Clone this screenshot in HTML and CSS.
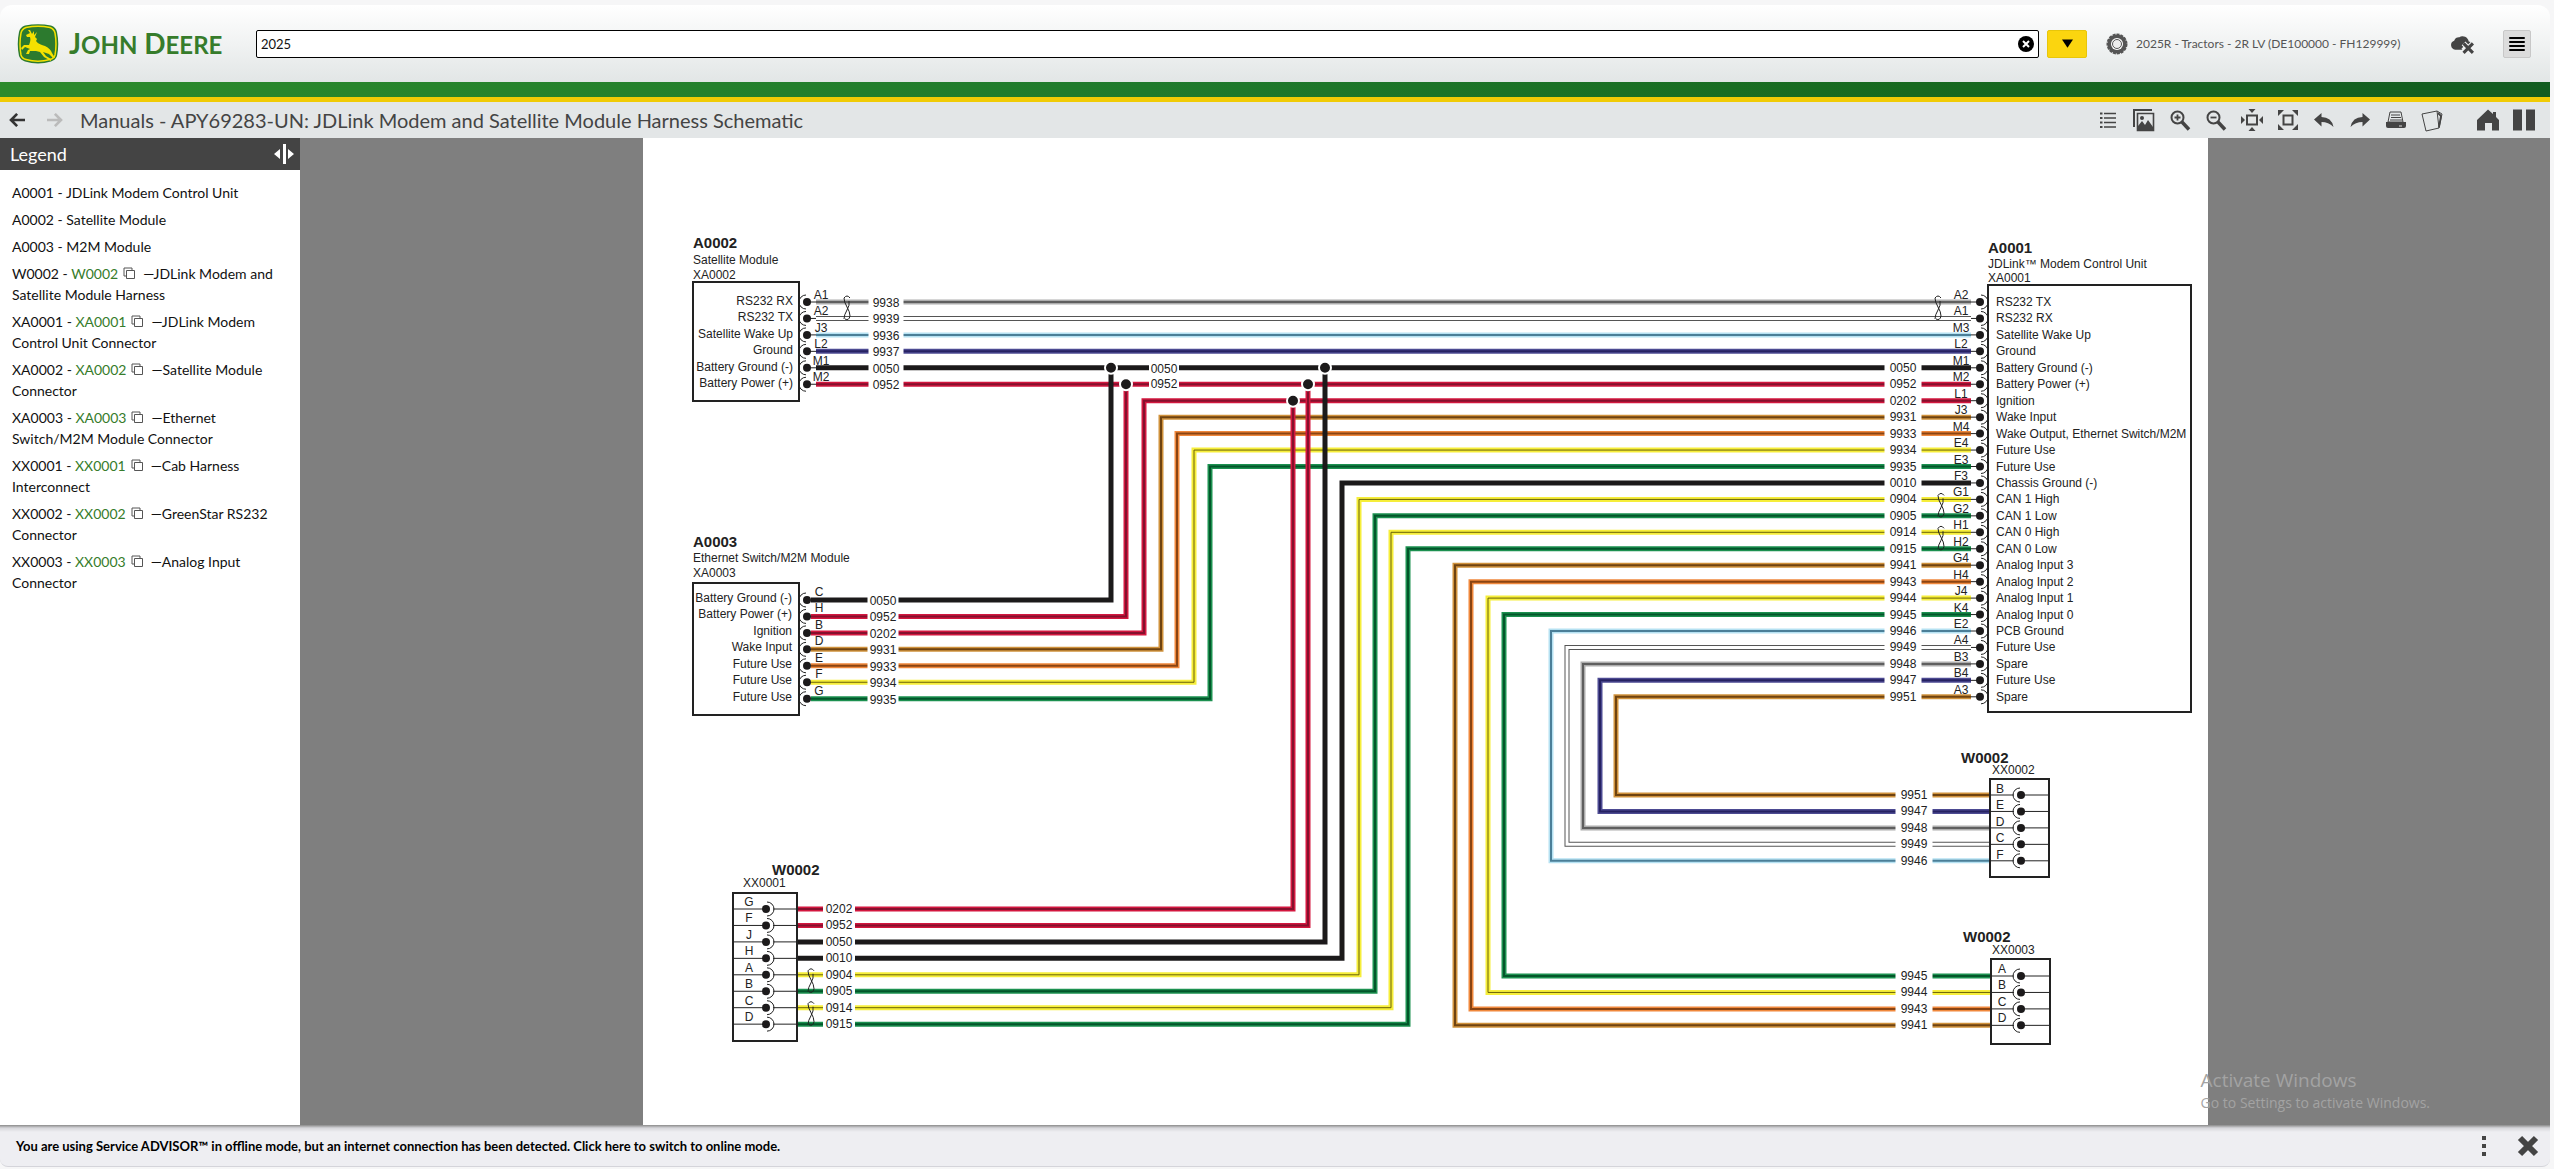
FILE: index.html
```html
<!DOCTYPE html>
<html lang="en">
<head>
<meta charset="utf-8">
<title>Service ADVISOR - Manuals</title>
<link rel="stylesheet" href="styles.css">
</head>
<body>
<div class="app">
  <header class="masthead">
    <a class="brand" href="#" aria-label="John Deere home">
      <svg class="brand-badge" viewBox="0 0 42 40" aria-hidden="true">
        <path d="M8 1.500Q21-1 34 1.500Q39 3 40 8Q42.500 20 40 32Q38.500 36 34 37.500Q21 41.500 8 37.500Q3.500 36 2 32Q-.5 20 2 8Q3 3 8 1.500Z" fill="#2c7a2e"/>
        <path d="M9 3.500Q21 1 33 3.500Q37 5 38 9Q40 20 38 31Q37 34.500 33 35.500Q21 39 9 35.500Q5 34.500 4 31Q2 20 4 9Q5 5 9 3.500Z" fill="#2c7a2e" stroke="#f5e100" stroke-width="1.500"/>
        <path d="M13 6l2 4 2-3 0 4 3-3-2 5 2 2-1 2c2 3 6 4 9 5 4 2 6 4 7 7l3 5-2 0-4-4-3-1-3-1 3 4 5 3 0 2-7-4-4-5-4-1-6 0-1 3-3 0 2-4 2-1-5-2-3 3-1-2 3-3 5 0c1-3 2-5 1-8l-3 0-1-2 4-2-2-3z" fill="#f5e100"/>
      </svg>
      <span class="brand-name">J<small>OHN</small> D<small>EERE</small></span>
    </a>
    <form class="search">
      <input class="search-input" type="text" aria-label="Search" value="2025">
      <button class="search-clear" type="button" aria-label="Clear search">
        <svg viewBox="0 0 16 16"><circle cx="8" cy="8" r="8"/><path d="M5 5l6 6M11 5l-6 6" stroke="#fff" stroke-width="2"/></svg>
      </button>
    </form>
    <button class="search-menu" type="button" aria-label="Search options"><svg viewBox="0 0 12 9"><path d="M0 0h12l-6 9z"/></svg></button>
    <button class="product" type="button">
      <svg viewBox="0 0 22 22"><circle cx="11" cy="11" r="9.500" fill="#555" stroke="#555" stroke-width="2" stroke-dasharray="3 1"/><circle cx="11" cy="11" r="6" fill="#fff"/><circle cx="11" cy="11" r="4.500" fill="#eee" stroke="#555"/></svg>
      <span>2025R - Tractors - 2R LV (DE100000 - FH129999)</span>
    </button>
    <button class="offline" type="button" aria-label="Offline">
      <svg viewBox="0 0 24 18"><path d="M5 14a4.500 4.500 0 0 1-1-8.700A5 5 0 0 1 9 2a6 6 0 0 1 9 4q2 0 3 2l-4 4-3-2-3 3 1 1z" fill="#444"/><path d="M13 8l9 9M22 8l-9 9" stroke="#f2f3f3" stroke-width="5"/><path d="M13 8l9 9M22 8l-9 9" stroke="#444" stroke-width="3"/></svg>
    </button>
    <button class="menu" type="button" aria-label="Menu"><svg viewBox="0 0 16 16"><path d="M1 2h14M1 6h14M1 10h14M1 14h14" stroke="#000" stroke-width="2" stroke-linecap="round"/></svg></button>
  </header>
  <div class="stripe"></div>
  <div class="toolbar">
    <button class="tool nav" type="button" aria-label="Back"><svg viewBox="0 0 20 16"><path d="M9 1L2 8l7 7M2 8h16" fill="none" stroke="#333" stroke-width="3"/></svg></button>
    <button class="tool nav" type="button" aria-label="Forward" disabled><svg viewBox="0 0 20 16"><path class="faint" d="M11 1l7 7-7 7M18 8H2" fill="none" stroke-width="3"/></svg></button>
    <h1 class="page-title">Manuals - APY69283-UN: JDLink Modem and Satellite Module Harness Schematic</h1>
    <div class="tools">
      <button class="tool" type="button" aria-label="Table of contents"><svg viewBox="0 0 24 24"><path d="M4 5.500h2.500M4 10h2.500M4 14.500h2.500M4 19h2.500" stroke-width="2"/><path d="M8 5.500h12M8 10h12M8 14.500h12M8 19h12" stroke-width="1.500"/></svg></button>
      <button class="tool" type="button" aria-label="Images"><svg viewBox="0 0 24 24"><path d="M2 19V2h18" stroke-width="2"/><path d="M5.500 5.500h16v17h-16z" stroke-width="1.600"/><path class="solid" d="M6 22v-4l4-5 3 4 3-5 5 7v3z"/><circle class="solid" cx="10" cy="10" r="2"/></svg></button>
      <button class="tool" type="button" aria-label="Zoom in"><svg viewBox="0 0 24 24"><circle cx="9.500" cy="9.500" r="6" stroke-width="2"/><path d="M14 14l7 7.500" stroke-width="3.500"/><path d="M9.500 6.500v6M6.500 9.500h6" stroke-width="1.800"/></svg></button>
      <button class="tool" type="button" aria-label="Zoom out"><svg viewBox="0 0 24 24"><circle cx="9.500" cy="9.500" r="6" stroke-width="2"/><path d="M14 14l7 7.500" stroke-width="3.500"/><path d="M6.500 9.500h6" stroke-width="1.800"/></svg></button>
      <button class="tool" type="button" aria-label="Fit to page"><svg viewBox="0 0 24 24"><path d="M7 7.500h10v9H7z" stroke-width="2"/><path class="solid" d="M8.500 1h7L12 5zM8.500 23h7L12 19zM1 8v8l4-4zM23 8v8l-4-4z"/></svg></button>
      <button class="tool" type="button" aria-label="Full screen"><svg viewBox="0 0 24 24"><path d="M7.500 7.500h9v9h-9z" stroke-width="2"/><path class="solid" d="M2 2h6L2 8zM22 2h-6l6 6zM2 22h6l-6-6zM22 22h-6l6-6z"/></svg></button>
      <button class="tool" type="button" aria-label="Undo"><svg viewBox="0 0 24 24"><path class="solid" d="M2 11.500L9.500 5v4q10 0 12 10-5-5-12-5v4.500z"/></svg></button>
      <button class="tool" type="button" aria-label="Redo"><svg viewBox="0 0 24 24"><path class="solid" d="M22 11.500L14.500 5v4q-10 0-12 10 5-5 12-5v4.500z"/></svg></button>
      <button class="tool" type="button" aria-label="Print"><svg viewBox="0 0 24 24"><path d="M6 4h11l2 10H4zM7 7h9M7 9.500h10M6 12h12" stroke-width="1"/><path class="solid" d="M2 14h20v4q0 2-2 2H4q-2 0-2-2z"/><path d="M15 18h3" stroke="#ddd"/></svg></button>
      <button class="tool" type="button" aria-label="Notes"><svg viewBox="0 0 24 24"><path d="M2 6L17 3l2 17-13 3zM17 3l5 3-3 14" stroke-width="1"/><path d="M18 5l3 3-2 11" stroke-width="1.800"/></svg></button>
      <span class="tool-gap"></span>
      <button class="tool" type="button" aria-label="Home"><svg viewBox="0 0 24 24"><path class="solid" d="M1 12L12 1.500 17 6V4h3v5l3 3v10.500h-7V15H9v7.500H1z"/></svg></button>
      <button class="tool" type="button" aria-label="Columns"><svg viewBox="0 0 24 24"><path class="solid" d="M1 1.500h9v21H1zM14 1.500h9v21h-9z"/></svg></button>
    </div>
  </div>
  <main class="workspace">
    <aside class="legend">
      <div class="legend-head">
        <h2 class="legend-title">Legend</h2>
        <button class="legend-grip" type="button" aria-label="Resize legend"><svg viewBox="0 0 22 20"><path d="M1 10l6-5v10zM21 10l-6-5v10zM10 0h3v20h-3z" fill="#fff"/></svg></button>
      </div>
      <ul class="legend-list">
        <li>A0001 - JDLink Modem Control Unit</li>
        <li>A0002 - Satellite Module</li>
        <li>A0003 - M2M Module</li>
        <li>W0002 - <a href="#">W0002<svg viewBox="0 0 12 12"><path d="M3 9H1V1h8v2M3.500 3.500h8v8h-8z"/></svg></a>—JDLink Modem and Satellite Module Harness</li>
        <li>XA0001 - <a href="#">XA0001<svg viewBox="0 0 12 12"><path d="M3 9H1V1h8v2M3.500 3.500h8v8h-8z"/></svg></a>—JDLink Modem Control Unit Connector</li>
        <li>XA0002 - <a href="#">XA0002<svg viewBox="0 0 12 12"><path d="M3 9H1V1h8v2M3.500 3.500h8v8h-8z"/></svg></a>—Satellite Module Connector</li>
        <li>XA0003 - <a href="#">XA0003<svg viewBox="0 0 12 12"><path d="M3 9H1V1h8v2M3.500 3.500h8v8h-8z"/></svg></a>—Ethernet Switch/M2M Module Connector</li>
        <li>XX0001 - <a href="#">XX0001<svg viewBox="0 0 12 12"><path d="M3 9H1V1h8v2M3.500 3.500h8v8h-8z"/></svg></a>—Cab Harness Interconnect</li>
        <li>XX0002 - <a href="#">XX0002<svg viewBox="0 0 12 12"><path d="M3 9H1V1h8v2M3.500 3.500h8v8h-8z"/></svg></a>—GreenStar RS232 Connector</li>
        <li>XX0003 - <a href="#">XX0003<svg viewBox="0 0 12 12"><path d="M3 9H1V1h8v2M3.500 3.500h8v8h-8z"/></svg></a>—Analog Input Connector</li>
      </ul>
    </aside>
    <section class="viewer">
      <svg class="sheet" id="sheet" viewBox="643 138 1565 987" role="img" aria-label="JDLink modem and satellite module harness schematic"></svg>
      <div class="watermark"><p class="watermark-title">Activate Windows</p><p class="watermark-note">Go to Settings to activate Windows.</p></div>
    </section>
  </main>
  <footer class="notice">
    <a class="notice-text" href="#">You are using Service ADVISOR™ in offline mode, but an internet connection has been detected. Click here to switch to online mode.</a>
    <button class="tool" type="button" aria-label="More"><svg viewBox="0 0 24 24"><path class="solid" d="M10 2h4v4h-4zM10 10h4v4h-4zM10 18h4v4h-4z"/></svg></button>
    <button class="tool" type="button" aria-label="Close"><svg viewBox="0 0 24 24"><path d="M4 4l16 16M20 4L4 20" stroke-width="6"/></svg></button>
  </footer>
</div>
<script src="schematic.js"></script>
</body>
</html>
```
FILE: styles.css
```css
* { box-sizing: border-box; }

body {
  margin: 0;
  background: #f6f6f7;
  color: #111;
  font-family: Lato, "Open Sans", sans-serif;
}

button {
  padding: 0;
  border: 0;
  background: none;
  color: inherit;
  font: inherit;
}

svg { display: block; }

.app {
  display: flex;
  flex-direction: column;
  height: 100vh;
  padding: 5px 4px 2px 0;
}

.masthead {
  display: flex;
  flex: none;
  align-items: center;
  height: 77px;
  padding: 0 19px 0 17px;
  border-radius: 12px 12px 0 0;
  background: linear-gradient(#fff, #e2e6e6);
}

.brand {
  display: flex;
  align-items: center;
  gap: 10px;
  width: 239px;
  color: #367c2b;
  text-decoration: none;
}

.brand-badge { width: 42px; height: 40px; }

.brand-name { font: 700 28px/32px Lato, sans-serif; white-space: nowrap; }
.brand-name small { font-size: 24px; }

.search {
  position: relative;
  flex: 1;
}

.search-input {
  display: block;
  width: 100%;
  height: 28px;
  padding: 0 30px 0 4px;
  border: 1px solid #000;
  border-radius: 2px;
  background: #fff;
  color: #111;
  font: 13px Lato, sans-serif;
}

.search-clear {
  position: absolute;
  top: 6px;
  right: 5px;
  width: 16px;
  height: 16px;
}

.search-menu {
  display: grid;
  place-items: center;
  width: 40px;
  height: 28px;
  margin-left: 8px;
  border: 1px solid #e8c60a;
  border-radius: 2px;
  background: #fbd50f;
}

.search-menu svg { width: 11px; height: 9px; }

.product {
  display: flex;
  align-items: center;
  gap: 8px;
  margin-left: 19px;
  color: #555;
  font-size: 12px;
  white-space: nowrap;
}

.product span { width: 270px; text-align: left; }
.product svg { width: 22px; height: 22px; }

.offline { margin: 2px 28px 0 44px; }
.offline svg { width: 25px; height: 19px; }

.menu {
  display: grid;
  place-items: center;
  width: 28px;
  height: 28px;
  border: 1px solid #c8c8c8;
  border-radius: 2px;
  background: #dcdcdc;
}

.menu svg { width: 16px; height: 16px; }

.stripe {
  flex: none;
  height: 20px;
  border-bottom: 5px solid #f0cb05;
  background: linear-gradient(90deg, #2c8a2c, #1f7a2c 45%, #17691f 75%, #125c20);
}

.toolbar {
  display: flex;
  flex: none;
  align-items: center;
  height: 36px;
  padding-right: 8px;
  background: #e3e6e7;
}

.tool {
  display: grid;
  flex: none;
  place-items: center;
  width: 36px;
  height: 36px;
}

.tool svg { width: 24px; height: 24px; fill: none; stroke: #444; }
.tool .solid { fill: #444; stroke: none; }
.tool .faint { stroke: #bbb; }
.tool.nav svg { width: 18px; height: 14px; }

.page-title {
  flex: 1;
  margin: 0 0 0 8px;
  color: #444;
  font-size: 20px;
  font-weight: 400;
  line-height: 36px;
  white-space: nowrap;
}

.tools { display: flex; }
.tool-gap { width: 20px; }

.workspace {
  display: flex;
  flex: 1;
  min-height: 0;
}

.legend {
  flex: none;
  width: 300px;
  background: #fff;
}

.legend-head {
  display: flex;
  align-items: center;
  justify-content: space-between;
  height: 32px;
  padding: 0 5px 0 10px;
  background: #444;
  color: #fff;
}

.legend-title { margin: 0; font-size: 18px; font-weight: 400; }
.legend-grip svg { width: 22px; height: 20px; }

.legend-list {
  margin: 0;
  padding: 12px 24px 0 12px;
  font-size: 14px;
  line-height: 21px;
  list-style: none;
}

.legend-list li { margin-bottom: 6px; }
.legend-list a { color: #367c2b; text-decoration: none; }

.legend-list svg {
  display: inline-block;
  width: 12px;
  height: 12px;
  margin: 0 8px 0 5px;
  fill: none;
  stroke: #555;
}

.viewer {
  position: relative;
  display: flex;
  flex: 1;
  justify-content: center;
  min-width: 0;
  background: #7f7f7f;
}

.sheet {
  height: 100%;
  max-width: 100%;
  background: #fff;
}

.sheet text {
  fill: #222;
  font-family: "Liberation Sans", Arial, sans-serif;
  font-size: 12px;
}

.sheet .device { font-size: 15px; font-weight: 700; }
.sheet .end { text-anchor: end; }
.sheet .mid { text-anchor: middle; }
.sheet .box { fill: none; stroke: #222; stroke-width: 2; }
.sheet .thin { fill: none; stroke: #222; stroke-width: 1; }
.sheet .dot { fill: #1c1a1b; }
.sheet .halo { fill: #1c1a1b; stroke: #fff; stroke-width: 2; }
.sheet .gap { fill: #fff; }
.sheet .case { fill: none; stroke-width: 5; }
.sheet .core { fill: none; stroke-width: 1; }
.sheet .black .case, .sheet .black .core { stroke: #1c1a1b; }
.sheet .red .case { stroke: #d3173f; }
.sheet .red .core { stroke: #85102d; stroke-width: 2; }
.sheet .grey .case { stroke: #adadad; }
.sheet .grey .core { stroke: #5f5f5f; stroke-width: 2; }
.sheet .white .case { stroke: #555; }
.sheet .white .core { stroke: #fff; stroke-width: 3; }
.sheet .blue .case { stroke: #b5e1f2; }
.sheet .blue .core { stroke: #4b7f98; stroke-width: 2; }
.sheet .navy .case { stroke: #4c4a92; }
.sheet .navy .core { stroke: #262262; stroke-width: 2; }
.sheet .brown .case { stroke: #d0923c; }
.sheet .brown .core { stroke: #6f4310; stroke-width: 2; }
.sheet .orange .case { stroke: #f0883c; }
.sheet .orange .core { stroke: #8a4412; stroke-width: 2; }
.sheet .yellow .case { stroke: #f6ee3a; }
.sheet .yellow .core { stroke: #6a6208; }
.sheet .green .case { stroke: #1c9150; }
.sheet .green .core { stroke: #03562a; stroke-width: 2; }

.watermark {
  position: absolute;
  right: 120px;
  bottom: 12px;
  color: #a3a3a3;
  font-family: "Open Sans", sans-serif;
}

.watermark p { margin: 0; }
.watermark-title { font-size: 19px; line-height: 24px; }
.watermark-note { font-size: 14px; line-height: 21px; }

.notice {
  display: flex;
  flex: none;
  align-items: center;
  gap: 8px;
  height: 42px;
  padding: 0 4px 0 16px;
  border-bottom: 1px solid #d4d4da;
  border-radius: 0 0 8px 8px;
  background: linear-gradient(#8a8a8a, #d6d6da 3px, #eeeef2 7px);
}

.notice-text {
  flex: 1;
  color: #000;
  font-size: 13px;
  font-weight: 700;
  text-decoration: none;
}
```
FILE: schematic.js
```js
const sheet = document.getElementById("sheet");
const PITCH = 16.45;
const out = [];
const add = (s) => out.push(s);

function text(x, y, value, cls = "") {
  add(`<text class="${cls}" x="${x}" y="${y}">${value}</text>`);
}

function wire(color, path) {
  add(`<g class="${color}"><path class="case" d="${path}"/><path class="core" d="${path}"/></g>`);
}

function tag(x, y, value, width) {
  add(`<rect class="gap" x="${x - width / 2}" y="${y - 6}" width="${width}" height="12"/>`);
  text(x, y + 4, value, "mid");
}

function box(x, y, w, h) {
  add(`<rect class="box" x="${x}" y="${y}" width="${w}" height="${h}"/>`);
}

// side: -1 puts the socket arc left of the pin, 1 puts it right
function pin(x, y, side) {
  const sweep = side < 0 ? 0 : 1;
  add(`<circle class="dot" cx="${x}" cy="${y}" r="4"/>`);
  add(`<path class="thin" d="M${x + side} ${y - 7}A7 7 0 0 ${sweep} ${x + side} ${y + 7}"/>`);
}

function twist(x, y) {
  add(`<path class="thin" d="M${x + 3} ${y - 4}q-3-4-6 0q0 4 3 9t3 9q-1 5-5 3M${x - 3} ${y + 17}q0-4 3-9t2-9"/>`);
}

const ecu = (i) => 302 + PITCH * i;
const aux = (i) => 600 + PITCH * i;
const cab = (i) => 909 + PITCH * i;
const star = (i) => 795 + PITCH * i;
const analog = (i) => 976 + PITCH * i;

// wires that run straight between A0002 and A0001
["grey", "white", "blue", "navy", "black", "red"].forEach((c, i) => wire(c, `M816 ${ecu(i)}H1971`));

// A0003 to A0001
[["red", 1144], ["brown", 1161], ["orange", 1177], ["yellow", 1194], ["green", 1210]]
  .forEach(([c, x], i) => wire(c, `M811 ${aux(i + 2)}H${x}V${ecu(i + 6)}H1971`));
wire("red", `M811 ${aux(1)}H1126V${ecu(5)}`);
wire("black", `M811 ${aux(0)}H1111V${ecu(4)}`);

// XX0001 to A0001
[["black", 1342], ["yellow", 1359], ["green", 1375], ["yellow", 1391], ["green", 1408]]
  .forEach(([c, x], i) => wire(c, `M797 ${cab(i + 3)}H${x}V${ecu(i + 11)}H1971`));
wire("red", `M797 ${cab(0)}H1293V${ecu(6)}`);
wire("red", `M797 ${cab(1)}H1308V${ecu(5)}`);
wire("black", `M797 ${cab(2)}H1325V${ecu(4)}`);

// XX0003 to A0001
[["brown", 1455], ["orange", 1471], ["yellow", 1488], ["green", 1504]]
  .forEach(([c, x], i) => wire(c, `M1991 ${analog(3 - i)}H${x}V${ecu(i + 16)}H1971`));

// XX0002 to A0001
[["blue", 1551], ["white", 1567], ["grey", 1583], ["navy", 1600], ["brown", 1616]]
  .forEach(([c, x], i) => wire(c, `M1990 ${star(4 - i)}H${x}V${ecu(i + 20)}H1971`));

[[1111, 4], [1126, 5], [1293, 6], [1308, 5], [1325, 4]]
  .forEach(([x, i]) => add(`<circle class="halo" cx="${x}" cy="${ecu(i)}" r="6"/>`));

text(693, 248, "A0002", "device");
text(693, 264, "Satellite Module");
text(693, 279, "XA0002");
box(693, 282, 106, 119);
[["RS232 RX", "A1", "9938"], ["RS232 TX", "A2", "9939"], ["Satellite Wake Up", "J3", "9936"],
 ["Ground", "L2", "9937"], ["Battery Ground (-)", "M1", "0050"], ["Battery Power (+)", "M2", "0952"]]
  .forEach(([name, id, num], i) => {
    const y = ecu(i);
    text(793, y + 3, name, "end");
    add(`<path class="thin" d="M807 ${y}h9"/>`);
    pin(807, y, -1);
    text(821, y - 3, id, "mid");
    tag(886, y + 1, num, 35);
  });
tag(1164, ecu(4) + 1, "0050", 30);
tag(1164, ecu(5), "0952", 30);

text(693, 547, "A0003", "device");
text(693, 562, "Ethernet Switch/M2M Module");
text(693, 577, "XA0003");
box(693, 583, 106, 132);
[["Battery Ground (-)", "C", "0050"], ["Battery Power (+)", "H", "0952"], ["Ignition", "B", "0202"],
 ["Wake Input", "D", "9931"], ["Future Use", "E", "9933"], ["Future Use", "F", "9934"], ["Future Use", "G", "9935"]]
  .forEach(([name, id, num], i) => {
    const y = aux(i);
    text(792, y + 2, name, "end");
    pin(807, y, -1);
    text(819, y - 4, id, "mid");
    tag(883, y + 1, num, 31);
  });

text(1988, 253, "A0001", "device");
text(1988, 268, "JDLink™ Modem Control Unit");
text(1988, 282, "XA0001");
box(1988, 285, 203, 427);
[["RS232 TX", "A2"], ["RS232 RX", "A1"], ["Satellite Wake Up", "M3"], ["Ground", "L2"],
 ["Battery Ground (-)", "M1", "0050"], ["Battery Power (+)", "M2", "0952"], ["Ignition", "L1", "0202"],
 ["Wake Input", "J3", "9931"], ["Wake Output, Ethernet Switch/M2M", "M4", "9933"], ["Future Use", "E4", "9934"],
 ["Future Use", "E3", "9935"], ["Chassis Ground (-)", "F3", "0010"], ["CAN 1 High", "G1", "0904"],
 ["CAN 1 Low", "G2", "0905"], ["CAN 0 High", "H1", "0914"], ["CAN 0 Low", "H2", "0915"],
 ["Analog Input 3", "G4", "9941"], ["Analog Input 2", "H4", "9943"], ["Analog Input 1", "J4", "9944"],
 ["Analog Input 0", "K4", "9945"], ["PCB Ground", "E2", "9946"], ["Future Use", "A4", "9949"],
 ["Spare", "B3", "9948"], ["Future Use", "B4", "9947"], ["Spare", "A3", "9951"]]
  .forEach(([name, id, num], i) => {
    const y = ecu(i);
    text(1996, y + 4, name);
    add(`<path class="thin" d="M1971 ${y}h9"/>`);
    pin(1980, y, 1);
    text(1961, y - 3, id, "mid");
    if (num) tag(1903, y, num, 37);
  });

text(772, 875, "W0002", "device");
text(743, 887, "XX0001");
box(733, 893, 64, 148);
[["G", "0202"], ["F", "0952"], ["J", "0050"], ["H", "0010"], ["A", "0904"], ["B", "0905"], ["C", "0914"], ["D", "0915"]]
  .forEach(([id, num], i) => {
    const y = cab(i);
    add(`<path class="thin" d="M733 ${y}h33M773 ${y}h24"/>`);
    pin(766, y, 1);
    text(749, y - 3, id, "mid");
    tag(839, y, num, 32);
  });

text(1961, 763, "W0002", "device");
text(1992, 774, "XX0002");
box(1990, 779, 59, 98);
[["B", "9951"], ["E", "9947"], ["D", "9948"], ["C", "9949"], ["F", "9946"]].forEach(([id, num], i) => {
  const y = star(i);
  add(`<path class="thin" d="M1990 ${y}h24M2021 ${y}h28"/>`);
  pin(2021, y, -1);
  text(2000, y - 2, id, "mid");
  tag(1914, y, num, 37);
});

text(1963, 942, "W0002", "device");
text(1992, 954, "XX0003");
box(1991, 959, 59, 85);
[["A", "9945"], ["B", "9944"], ["C", "9943"], ["D", "9941"]].forEach(([id, num], i) => {
  const y = analog(i);
  add(`<path class="thin" d="M1991 ${y}h23M2021 ${y}h29"/>`);
  pin(2021, y, -1);
  text(2002, y - 3, id, "mid");
  tag(1914, y, num, 37);
});

twist(847, ecu(0));
twist(1938, ecu(0));
twist(1941, ecu(12));
twist(1941, ecu(14));
twist(811, cab(4));
twist(811, cab(6));

sheet.innerHTML = out.join("");
```
